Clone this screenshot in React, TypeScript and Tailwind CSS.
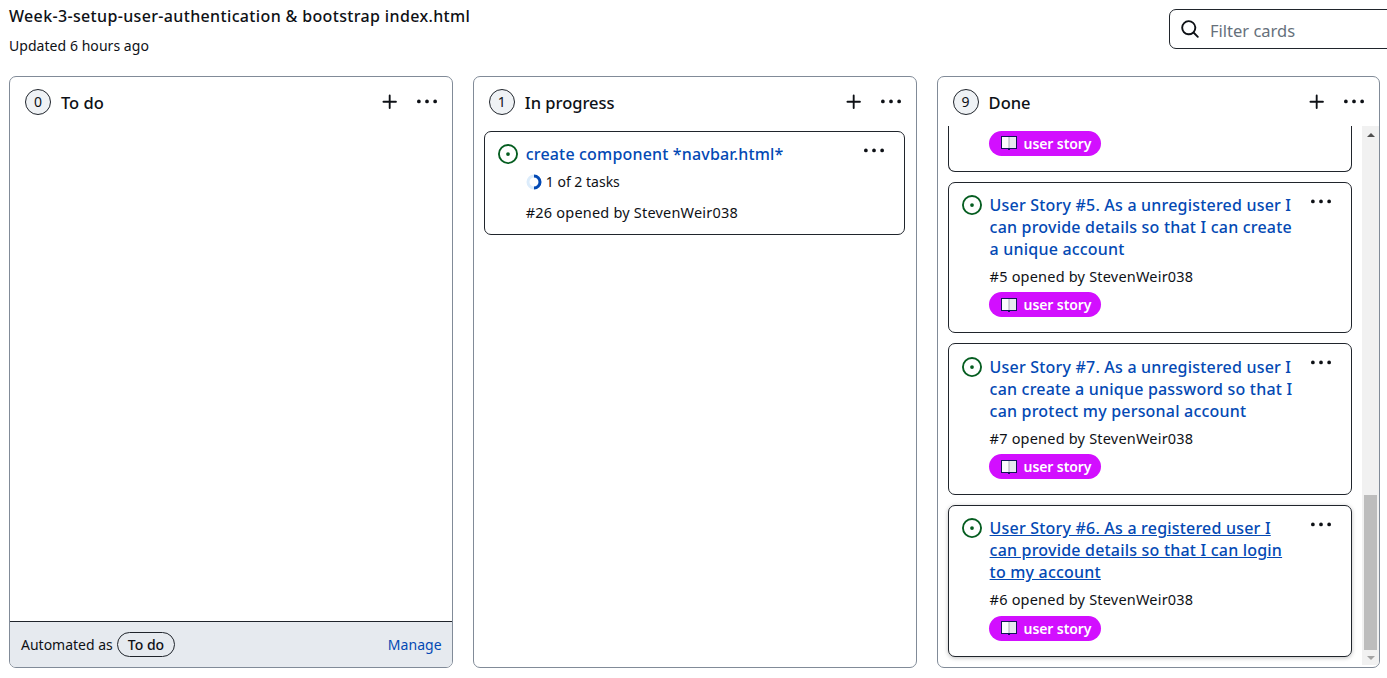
const FONT = "font-['Noto_Sans',sans-serif]";

const Kebab = ({ className = "" }: { className?: string }) => (
  <svg viewBox="0 0 16 16" width="20" height="20" fill="#0e1116" className={className}>
    <path d="M8 9a1.5 1.5 0 1 0 0-3 1.5 1.5 0 0 0 0 3ZM1.5 9a1.5 1.5 0 1 0 0-3 1.5 1.5 0 0 0 0 3Zm13 0a1.5 1.5 0 1 0 0-3 1.5 1.5 0 0 0 0 3Z" />
  </svg>
);

const Plus = () => (
  <svg viewBox="0 0 16 16" width="20" height="20" fill="#0e1116">
    <path d="M7.75 2a.75.75 0 0 1 .75.75V7h4.25a.75.75 0 0 1 0 1.5H8.5v4.25a.75.75 0 0 1-1.5 0V8.5H2.75a.75.75 0 0 1 0-1.5H7V2.75A.75.75 0 0 1 7.75 2Z" />
  </svg>
);

const Search = () => (
  <svg viewBox="0 0 16 16" width="20" height="20" fill="#0e1116">
    <path d="M10.68 11.74a6 6 0 0 1-7.922-8.982 6 6 0 0 1 8.982 7.922l3.04 3.04a.749.749 0 0 1-.326 1.275.749.749 0 0 1-.734-.215ZM11.5 7a4.499 4.499 0 1 0-8.997 0A4.499 4.499 0 0 0 11.5 7Z" />
  </svg>
);

const IssueOpened = () => (
  <svg viewBox="0 0 16 16" width="20" height="20" fill="#055d20" className="shrink-0">
    <path d="M8 9.5a1.5 1.5 0 1 0 0-3 1.5 1.5 0 0 0 0 3Z" />
    <path d="M8 0a8 8 0 1 1 0 16A8 8 0 0 1 8 0ZM1.5 8a6.5 6.5 0 1 0 13 0 6.5 6.5 0 0 0-13 0Z" />
  </svg>
);

// open book emoji
const Book = () => (
  <svg viewBox="0 0 16 14" width="16" height="14" className="shrink-0">
    <rect x="0" y="0" width="16" height="13" fill="#14145a" />
    <rect x="1" y="1" width="7" height="11" fill="#fbfbfd" />
    <rect x="8" y="1" width="7" height="11" fill="#e6e9ee" />
    <rect x="7.5" y="1" width="1" height="11" fill="#a9aeb8" />
    <rect x="7" y="13" width="2" height="1" fill="#14145a" />
  </svg>
);

const Progress = () => (
  <svg viewBox="0 0 16 16" width="16" height="16" className="shrink-0">
    <circle cx="8" cy="8" r="6" fill="none" stroke="#dcecfb" strokeWidth="3" />
    <path d="M8 2a6 6 0 0 1 0 12" fill="none" stroke="#0349b4" strokeWidth="3" />
  </svg>
);

const Label = () => (
  <span className="flex h-[25px] w-[112px] items-center gap-[7px] rounded-full bg-[#d20fff] pl-[12px] text-[14px] font-semibold tracking-[-0.1px] text-white">
    <Book />
    user story
  </span>
);

const ColumnHeader = ({ count, name }: { count: number; name: string }) => (
  <div className="flex h-[49px] shrink-0 items-center pl-[15px] pr-[15px]">
    <span className="flex h-[26px] w-[26px] items-center justify-center rounded-full border border-[#20252c] bg-[#eff2f5] text-[14px] text-[#0e1116]">
      {count}
    </span>
    <span className="ml-[10px] pt-[4px] text-[16.5px] font-medium text-[#0e1116]">{name}</span>
    <span className="ml-auto mr-[17px]">
      <Plus />
    </span>
    <Kebab />
  </div>
);

const StoryCard = ({
  title,
  num,
  hovered = false,
}: {
  title: string;
  num: number;
  hovered?: boolean;
}) => (
  <div
    className={`relative h-[151.8px] shrink-0 rounded-[7px] border border-[#20252c] bg-white pl-[13px] pr-[20px] pt-[11.2px] ${
      hovered ? "shadow-[0_1px_4px_rgba(0,0,0,0.25)]" : ""
    }`}
  >
    <div className="flex gap-[8px]">
      <span className="pt-[1px]">
        <IssueOpened />
      </span>
      <div className="w-[308px]">
        <p
          className={`text-[16px] font-medium leading-[22px] tracking-[0.2px] text-[#0349b4] ${
            hovered ? "underline" : ""
          }`}
        >
          {title}
        </p>
        <p className="mt-[5px] text-[14.5px] leading-[22px] tracking-[0.2px] text-[#0e1116]">
          #{num} opened by StevenWeir038
        </p>
        <div className="mt-[5.6px] -ml-px">
          <Label />
        </div>
      </div>
    </div>
    <span className="absolute right-[20px] top-[9px]">
      <Kebab />
    </span>
  </div>
);

const Scrollbar = () => (
  <div className="flex w-[17px] shrink-0 flex-col bg-[#f1f1f1]">
    <div className="flex h-[17px] shrink-0 items-center justify-center">
      <span className="h-0 w-0 border-x-[4px] border-b-[4px] border-x-transparent border-b-[#505050]" />
    </div>
    <div className="flex-1" />
    <div className="mx-[2px] h-[155px] shrink-0 bg-[#bdbdbd]" />
    <div className="flex h-[15px] shrink-0 items-center justify-center">
      <span className="h-0 w-0 border-x-[4px] border-t-[4px] border-x-transparent border-t-[#a3a3a3]" />
    </div>
  </div>
);

export default function App() {
  return (
    <div className={`${FONT} h-[678px] w-[1387px] overflow-hidden bg-white`}>
      <header className="flex h-[76px] items-start pl-[9px]">
        <div className="pt-[3px]">
          <h1 className="text-[16px] font-medium leading-[26px] tracking-[0.35px] text-[#0e1116]">
            Week-3-setup-user-authentication &amp; bootstrap index.html
          </h1>
          <p className="mt-[6px] text-[14px] leading-[22px] tracking-[0.05px] text-[#0e1116]">
            Updated 6 hours ago
          </p>
        </div>
        <div className="ml-auto mt-[9px] flex h-[40px] w-[240px] shrink-0 translate-x-[22px] items-center gap-[10px] rounded-[7px] border border-[#20252c] pl-[10px]">
          <Search />
          <span className="pt-[4px] text-[16.5px] text-[#66707b]">Filter cards</span>
        </div>
      </header>

      <main className="flex gap-[20px] pl-[9px]">
        <section className="flex h-[592px] w-[443.8px] flex-col overflow-hidden rounded-[7px] border border-[#818b98]">
          <ColumnHeader count={0} name="To do" />
          <div className="flex-1" />
          <div className="flex h-[46px] shrink-0 items-center border-t border-[#20252c] bg-[#e6eaef] pl-[11px] pr-[10px] text-[14px]">
            <span className="text-[#0e1116]">Automated as</span>
            <span className="ml-[4px] flex h-[25px] items-center rounded-full border border-[#20252c] px-[10px] font-medium text-[#0e1116]">
              To do
            </span>
            <span className="ml-auto tracking-[0.1px] text-[#0349b4]">Manage</span>
          </div>
        </section>

        <section className="flex h-[592px] w-[443.8px] flex-col overflow-hidden rounded-[7px] border border-[#818b98]">
          <ColumnHeader count={1} name="In progress" />
          <div className="pl-[10px] pr-[10.6px] pt-[5px]">
            <div className="relative h-[104px] rounded-[7px] border border-[#20252c] pl-[13px] pt-[11px]">
              <div className="flex gap-[8px]">
                <span className="pt-[1px]">
                  <IssueOpened />
                </span>
                <div>
                  <p className="text-[16px] font-medium leading-[22px] tracking-[0.17px] text-[#0349b4]">
                    create component *navbar.html*
                  </p>
                  <p className="mt-[7px] flex items-center gap-[4px] text-[14px] leading-[20px] text-[#0e1116]">
                    <Progress />
                    1 of 2 tasks
                  </p>
                  <p className="mt-[9px] text-[14.5px] leading-[22px] tracking-[0.2px] text-[#0e1116]">
                    #26 opened by StevenWeir038
                  </p>
                </div>
              </div>
              <span className="absolute right-[20px] top-[9px]">
                <Kebab />
              </span>
            </div>
          </div>
        </section>

        <section className="flex h-[592px] w-[443.8px] flex-col overflow-hidden rounded-[7px] border border-[#818b98]">
          <ColumnHeader count={9} name="Done" />
          <div className="flex min-h-0 flex-1 pb-[2px]">
            <div className="flex min-w-0 flex-1 flex-col justify-end gap-[10px] overflow-hidden pb-[8px] pl-[10px] pr-[10px]">
              <div className="shrink-0 rounded-b-[7px] border-x border-b border-[#20252c] pb-[15px] pl-[40px] pt-[5px]">
                <Label />
              </div>
              <StoryCard
                title="User Story #5. As a unregistered user I can provide details so that I can create a unique account"
                num={5}
              />
              <StoryCard
                title="User Story #7. As a unregistered user I can create a unique password so that I can protect my personal account"
                num={7}
              />
              <StoryCard
                title="User Story #6. As a registered user I can provide details so that I can login to my account"
                num={6}
                hovered
              />
            </div>
            <Scrollbar />
          </div>
        </section>
      </main>
    </div>
  );
}
